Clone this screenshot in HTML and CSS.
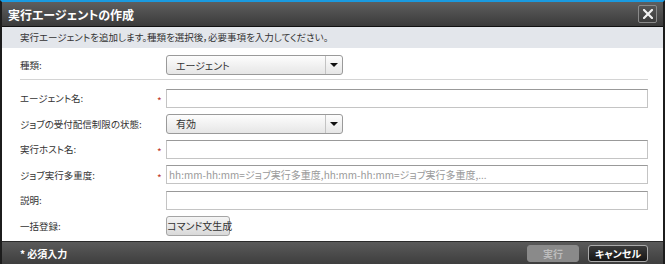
FILE: index.html
```html
<!DOCTYPE html>
<html lang="ja">
<head>
  <meta charset="UTF-8">
  <title>実行エージェントの作成</title>
  <link rel="stylesheet" href="styles.css">
</head>
<body>
  <div class="dialog">
    <!-- Title bar -->
    <div class="titlebar">
      <span class="title">実行エージェントの作成</span>
      <button class="close" type="button" aria-label="閉じる">
        <svg width="10" height="10" viewBox="0 0 10 10">
          <path d="M1 1 L9 9 M9 1 L1 9" stroke="#f2f2f2" stroke-width="2.2" stroke-linecap="square"/>
        </svg>
      </button>
    </div>

    <div class="info">実行エージェントを追加します。種類を選択後，必要事項を入力してください。</div>

    <div class="content">
      <div class="row first">
        <label class="label">種類:</label>
        <span class="req"></span>
        <div class="select"><span>エージェント</span><i class="arrow"></i></div>
      </div>
      <hr class="sep">

      <div class="row">
        <label class="label">エージェント名:</label>
        <span class="req">*</span>
        <input class="field" type="text">
      </div>
      <div class="row">
        <label class="label">ジョブの受付配信制限の状態:</label>
        <span class="req"></span>
        <div class="select"><span>有効</span><i class="arrow"></i></div>
      </div>
      <div class="row">
        <label class="label">実行ホスト名:</label>
        <span class="req">*</span>
        <input class="field" type="text">
      </div>
      <div class="row">
        <label class="label">ジョブ実行多重度:</label>
        <span class="req">*</span>
        <input class="field" type="text" placeholder="hh:mm-hh:mm=ジョブ実行多重度,hh:mm-hh:mm=ジョブ実行多重度,...">
      </div>
      <div class="row">
        <label class="label">説明:</label>
        <span class="req"></span>
        <input class="field" type="text">
      </div>
      <div class="row">
        <label class="label">一括登録:</label>
        <span class="req"></span>
        <button class="cmd" type="button">コマンド文生成</button>
      </div>
    </div>

    <!-- Footer -->
    <div class="footer">
      <span class="note">* 必須入力</span>
      <div class="actions">
        <button class="btn run" type="button" disabled>実行</button>
        <button class="btn cancel" type="button">キャンセル</button>
      </div>
    </div>
  </div>
</body>
</html>
```

FILE: styles.css
```css
body {
  margin: 0;
  background: #fff;
  font-family: "Noto Sans CJK JP", "Noto Sans", sans-serif;
  font-size: 10px;
  font-feature-settings: "palt";
  color: #333;
}

.dialog {
  width: 661px;
  height: 262px;
  border-top: 2px solid #1a9ae0;
  border-left: 2px solid #1c1c1c;
  border-right: 2px solid #1c1c1c;
  display: flex;
  flex-direction: column;
}

/* Title bar */
.titlebar {
  height: 25px;
  background: linear-gradient(#5e5e5e, #3a3a3a);
  border-bottom: 1px solid #111;
  display: flex;
  align-items: center;
  justify-content: space-between;
  padding: 0 6px 0 6px;
}

.title {
  color: #fff;
  font-size: 12px;
  font-weight: bold;
}

.close {
  width: 19px;
  height: 18px;
  padding: 0;
  margin: 0;
  border: 1px solid #8a8a8a;
  border-radius: 2px;
  background: linear-gradient(#555, #3c3c3c);
  display: flex;
  align-items: center;
  justify-content: center;
}

.info {
  height: 21px;
  line-height: 21px;
  background: #e3e6eb;
  padding-left: 18px;
  font-size: 9.5px;
  color: #333;
}

/* Form */
.content {
  flex: 1;
  padding: 7px 15px 0 18px;
}

.row {
  display: flex;
  align-items: center;
  height: 20px;
  margin-bottom: 5.5px;
}

.row.first {
  margin-bottom: 0;
}

.label {
  width: 137px;
  white-space: nowrap;
  font-size: 9.5px;
  color: #333;
}

.req {
  width: 9px;
  height: 20px;
  line-height: 1;
  padding-top: 8px;
  box-sizing: border-box;
  color: #c0392b;
  font-size: 10px;
}

.sep {
  border: none;
  border-top: 1px solid #d4d4d4;
  margin: 4px 0 8px 0;
  height: 0;
}

.field {
  flex: 1;
  height: 19px;
  box-sizing: border-box;
  border: 1px solid #c4c4c4;
  border-top-color: #999;
  padding: 0 2px;
  margin: 0;
  font-family: inherit;
  font-feature-settings: "palt";
  font-size: 10px;
  color: #333;
  outline: none;
}

.field::placeholder {
  color: #999;
}

.select {
  width: 177px;
  height: 20px;
  box-sizing: border-box;
  border: 1px solid #9a9a9a;
  border-radius: 3px;
  background: linear-gradient(#fdfdfd, #e6e6e6);
  display: flex;
  align-items: center;
  justify-content: space-between;
  padding-left: 9px;
  font-size: 10px;
}

.arrow {
  width: 16px;
  height: 18px;
  border-left: 1px solid #c3c3c3;
  position: relative;
}

.arrow::after {
  content: "";
  position: absolute;
  left: 4px;
  top: 7px;
  border-left: 4px solid transparent;
  border-right: 4px solid transparent;
  border-top: 4px solid #111;
}

.cmd {
  height: 20px;
  width: 64px;
  padding: 0;
  border: 1px solid #a5a5a5;
  border-radius: 3px;
  background: linear-gradient(#f5f5f5, #d9d9d9);
  font-family: inherit;
  font-feature-settings: "palt";
  font-size: 10px;
  color: #333;
  white-space: nowrap;
}

/* Footer */
.footer {
  height: 22px;
  background: linear-gradient(#5a5a5a, #3e3e3e);
  border-top: 1px solid #2a2a2a;
  display: flex;
  align-items: center;
  justify-content: space-between;
  padding: 0 15px 0 18px;
}

.note {
  color: #fff;
  font-size: 10px;
  font-weight: bold;
}

.actions {
  display: flex;
  gap: 9px;
}

.btn {
  height: 17px;
  padding: 0;
  font-family: inherit;
  font-feature-settings: "palt";
  font-size: 10px;
  font-weight: bold;
  border-radius: 3px;
}

.btn.run {
  width: 52px;
  background: #8a8a8a;
  border: 1px solid #8a8a8a;
  color: #bdbdbd;
}

.btn.cancel {
  width: 60px;
  background: linear-gradient(#3a3a3a, #151515);
  border: 1px solid #aaa;
  color: #fff;
}
```
